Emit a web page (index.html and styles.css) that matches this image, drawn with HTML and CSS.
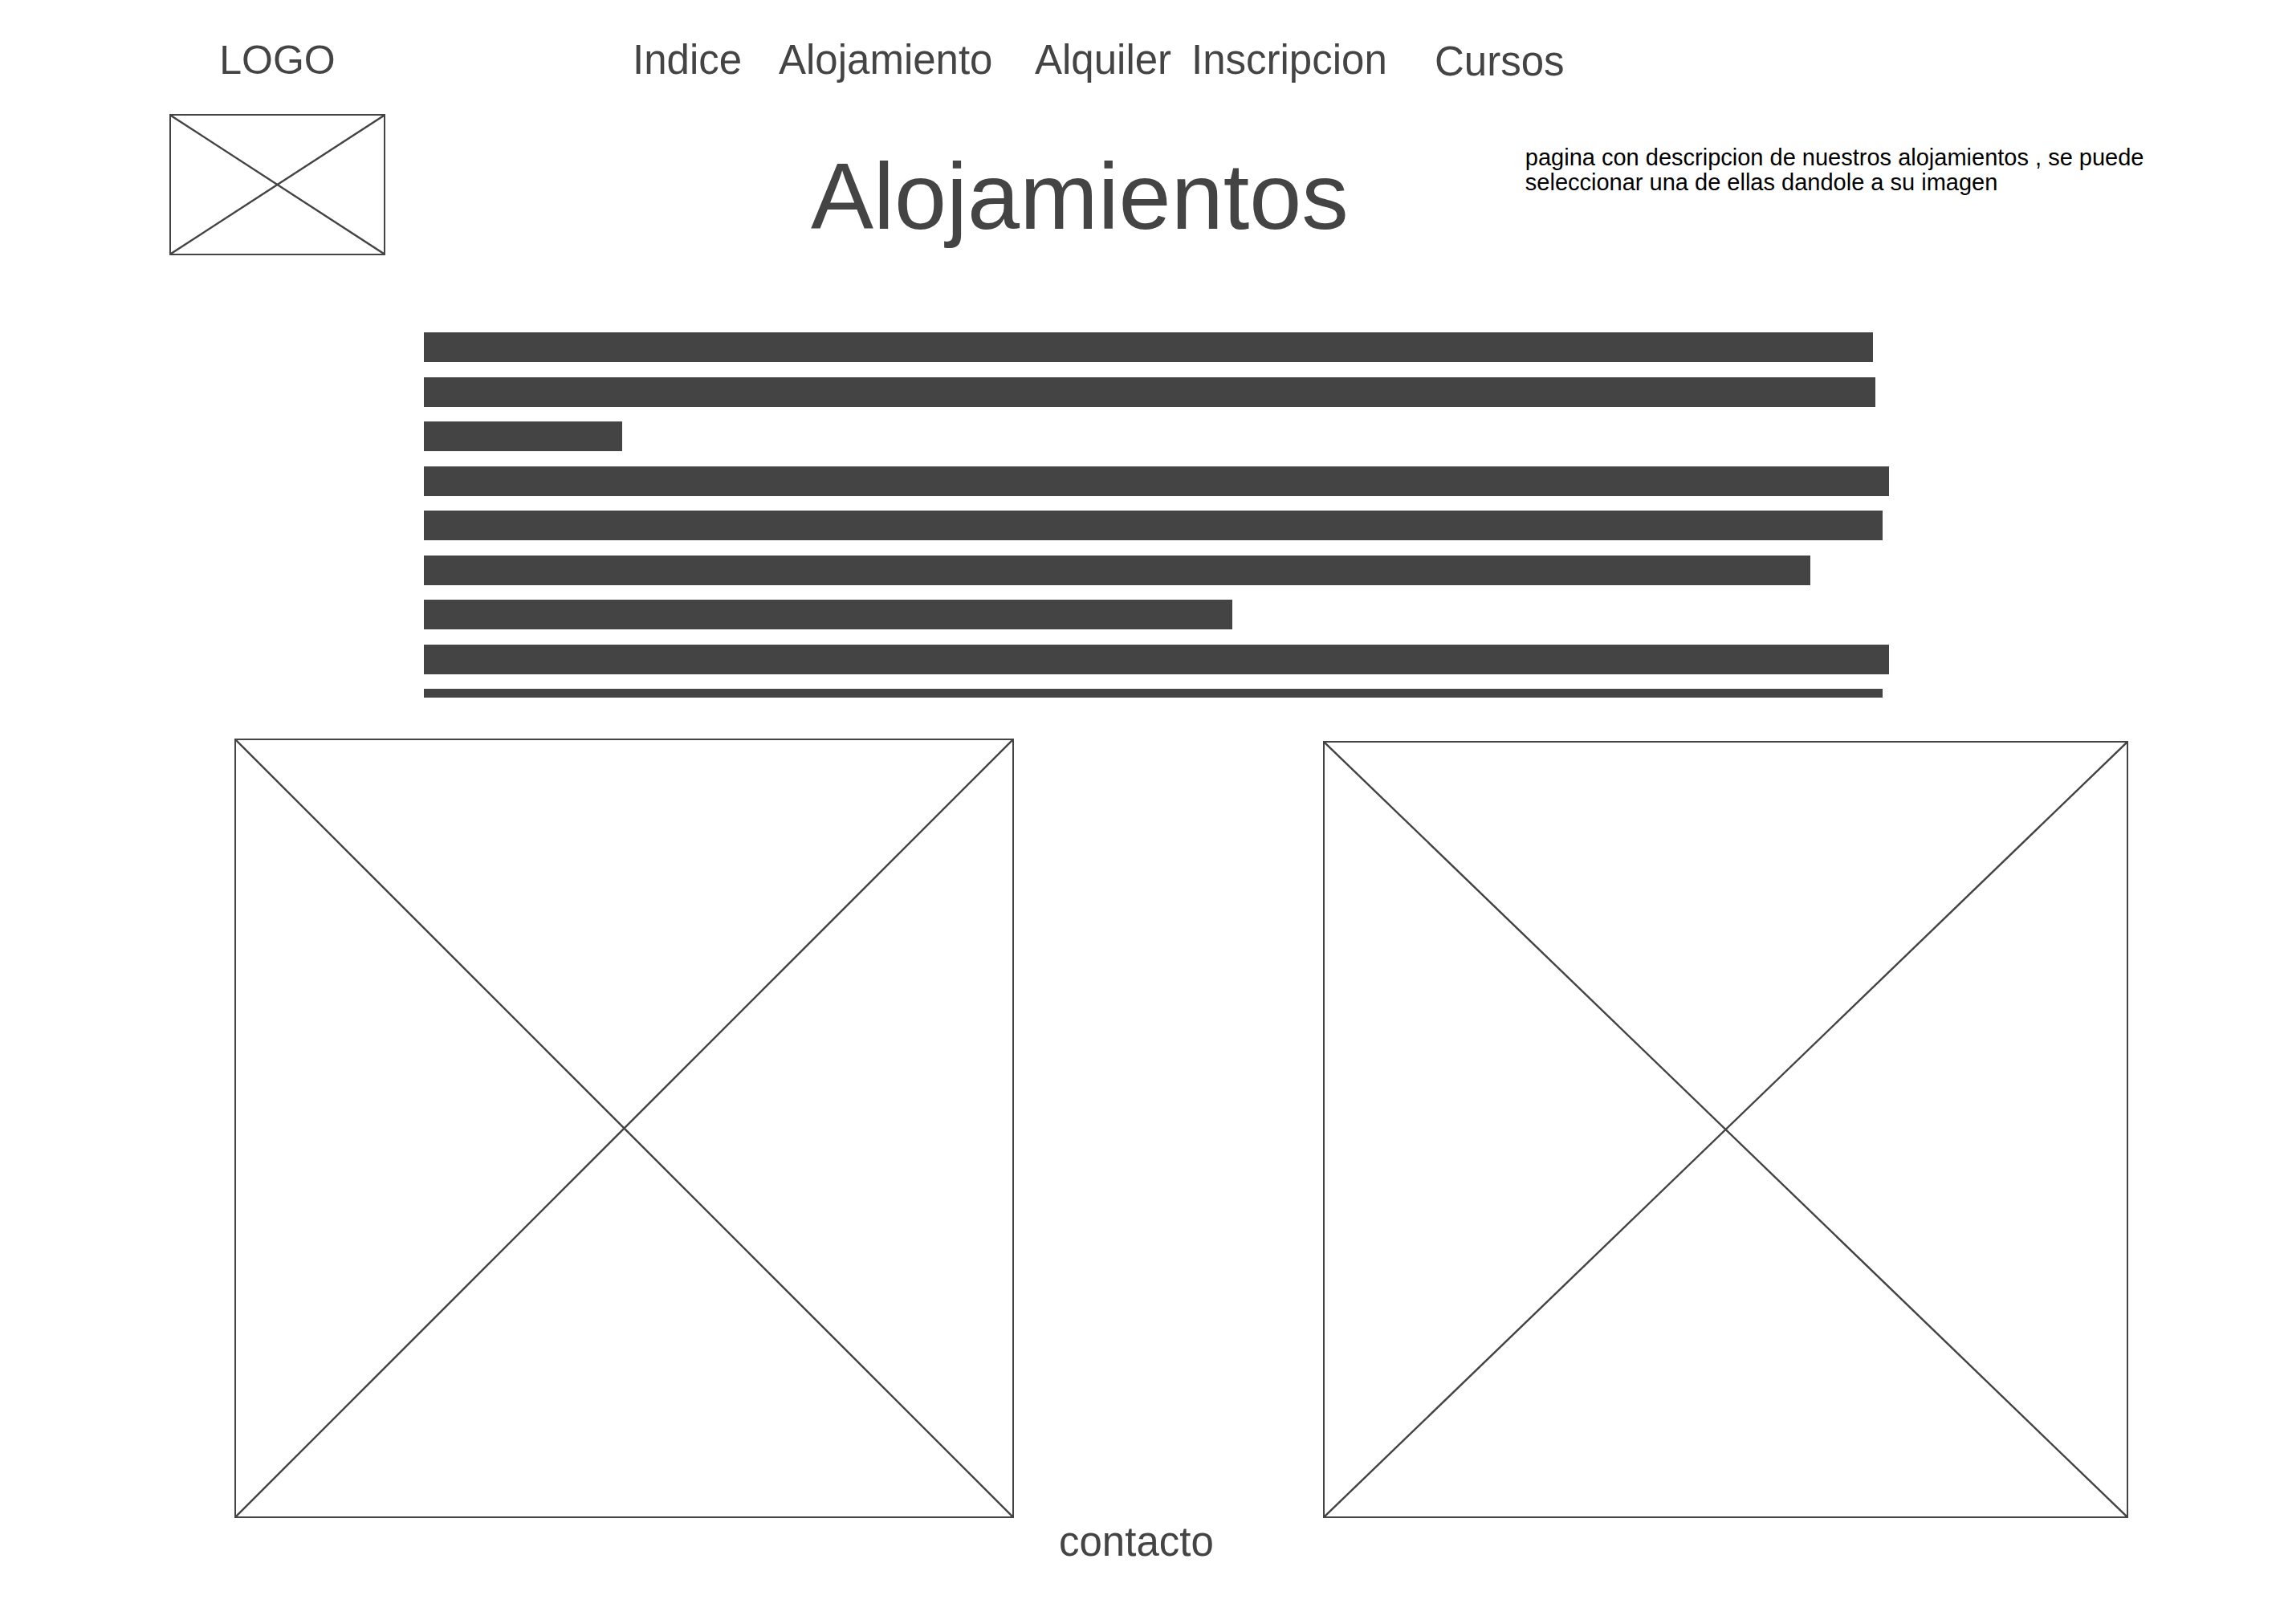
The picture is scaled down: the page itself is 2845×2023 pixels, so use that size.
FILE: index.html
```html
<!DOCTYPE html>
<html lang="es">

<head>
    <meta charset="UTF-8">
    <meta name="viewport" content="width=device-width, initial-scale=1.0">
    <title>Alojamientos</title>
    <link rel="stylesheet" href="styles.css">
</head>

<body>
    <header class="top">
        <div class="brand">
            <div class="brand-name">LOGO</div>
            <div class="placeholder logo-img">
                <svg viewBox="0 0 100 100" preserveAspectRatio="none">
                    <line x1="0" y1="0" x2="100" y2="100" />
                    <line x1="100" y1="0" x2="0" y2="100" />
                </svg>
            </div>
        </div>
        <div class="head-main">
            <nav class="menu">
                <a href="#" class="menu-item w-indice">Indice</a>
                <a href="#" class="menu-item w-aloja">Alojamiento</a>
                <a href="#" class="menu-item w-alquiler">Alquiler</a>
                <a href="#" class="menu-item w-inscripcion">Inscripcion</a>
                <a href="#" class="menu-item cursos">Cursos</a>
            </nav>
            <div class="intro">
                <h1 class="page-title">Alojamientos</h1>
                <p class="note">pagina con descripcion de nuestros alojamientos , se puede seleccionar una de ellas dandole a su imagen</p>
            </div>
        </div>
    </header>

    <section class="text-block">
        <div class="line" style="width:1805px"></div>
        <div class="line" style="width:1808px"></div>
        <div class="line" style="width:247px"></div>
        <div class="line" style="width:1825px"></div>
        <div class="line" style="width:1817px"></div>
        <div class="line" style="width:1727px"></div>
        <div class="line" style="width:1007px"></div>
        <div class="line" style="width:1825px"></div>
        <div class="line" style="width:1817px"></div>
    </section>

    <section class="gallery">
        <a href="#" class="placeholder pic pic-left">
            <svg viewBox="0 0 100 100" preserveAspectRatio="none">
                <line x1="0" y1="0" x2="100" y2="100" />
                <line x1="100" y1="0" x2="0" y2="100" />
            </svg>
        </a>
        <a href="#" class="placeholder pic pic-right">
            <svg viewBox="0 0 100 100" preserveAspectRatio="none">
                <line x1="0" y1="0" x2="100" y2="100" />
                <line x1="100" y1="0" x2="0" y2="100" />
            </svg>
        </a>
    </section>

    <footer class="foot">contacto</footer>
</body>

</html>
```

FILE: styles.css
```css
body {
    margin: 0;
    width: 2845px;
    background: #ffffff;
    font-family: "Liberation Sans", Arial, sans-serif;
    color: #444444;
}

a {
    color: inherit;
    text-decoration: none;
}

/* header */
.top {
    display: flex;
    align-items: flex-start;
    padding-top: 45px;
    padding-left: 211px;
}

.brand {
    width: 269px;
    display: flex;
    flex-direction: column;
}

.brand-name {
    font-size: 50px;
    line-height: 60px;
    text-align: center;
    margin-bottom: 37px;
}

.logo-img {
    width: 269px;
    height: 176px;
}

.head-main {
    margin-left: 308px;
}

.menu {
    display: flex;
    align-items: flex-start;
    font-size: 51px;
    line-height: 60px;
}

.w-indice {
    width: 182px;
}

.w-aloja {
    width: 319px;
}

.w-alquiler {
    width: 195px;
}

.w-inscripcion {
    width: 303px;
}

.cursos {
    margin-top: 2px;
}

.intro {
    display: flex;
    align-items: flex-start;
    margin-top: 74px;
}

.page-title {
    margin: 5px 0 0 222px;
    font-size: 117px;
    line-height: 117px;
    font-weight: normal;
    color: #444444;
}

.note {
    margin: 0 0 0 220px;
    width: 800px;
    font-size: 29px;
    line-height: 31px;
    color: #000000;
}

/* placeholder boxes */
.placeholder {
    display: block;
    box-sizing: border-box;
    border: 2px solid #444444;
}

.placeholder svg {
    display: block;
    width: 100%;
    height: 100%;
}

.placeholder line {
    stroke: #444444;
    stroke-width: 2.4;
    vector-effect: non-scaling-stroke;
}

/* fake text lines */
.text-block {
    margin-top: 96px;
    padding-left: 528px;
    height: 455px;
    overflow: hidden;
    display: flex;
    flex-direction: column;
    gap: 18.5px;
}

.line {
    flex: none;
    height: 37px;
    background: #444444;
}

/* images */
.gallery {
    display: flex;
    align-items: flex-start;
    margin-top: 51px;
    padding-left: 292px;
    gap: 385px;
}

.pic-left {
    width: 971px;
    height: 971px;
}

.pic-right {
    width: 1003px;
    height: 968px;
    margin-top: 3px;
}

.foot {
    padding-left: 1319px;
    font-size: 51px;
    line-height: 60px;
}
```
